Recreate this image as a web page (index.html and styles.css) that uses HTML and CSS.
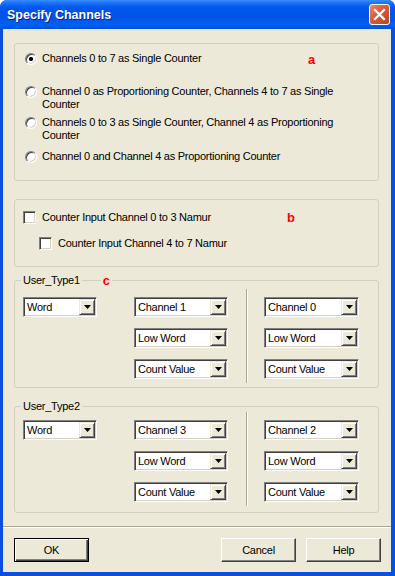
FILE: index.html
```html
<!DOCTYPE html>
<html>
<head>
<meta charset="utf-8">
<title>Specify Channels</title>
<link rel="stylesheet" href="styles.css">
</head>
<body>
<div class="window">
	<div class="titlebar">
		<span class="title">Specify Channels</span>
		<span class="close"><svg width="19" height="19" viewBox="0 0 19 19"><path d="M5 5 L14 14 M14 5 L5 14" stroke="#fff" stroke-width="2.2" stroke-linecap="square"/></svg></span>
	</div>
	<div class="client">
		<div class="group group-mode">
			<div class="option"><span class="radio checked"></span><span class="label">Channels 0 to 7 as Single Counter</span></div>
			<div class="option opt2"><span class="radio"></span><span class="label">Channel 0 as Proportioning Counter, Channels 4 to 7 as Single<br>Counter</span></div>
			<div class="option opt3"><span class="radio"></span><span class="label">Channels 0 to 3 as Single Counter, Channel 4 as Proportioning<br>Counter</span></div>
			<div class="option opt4"><span class="radio"></span><span class="label">Channel 0 and Channel 4 as Proportioning Counter</span></div>
			<span class="note note-a">a</span>
		</div>

		<div class="group group-namur">
			<div class="check-row"><span class="check"></span><span class="label">Counter Input Channel 0 to 3 Namur</span></div>
			<div class="check-row sub"><span class="check"></span><span class="label">Counter Input Channel 4 to 7 Namur</span></div>
			<span class="note note-b">b</span>
		</div>

		<div class="group group-type type1">
			<div class="legend"><span class="legend-text">User_Type1</span><span class="note-c">c</span></div>
			<div class="combos">
				<div class="combo w-type"><span class="combo-text">Word</span><span class="combo-btn"><svg width="7" height="4"><polygon points="0,0 7,0 3.5,4" fill="#000"/></svg></span></div>
				<div class="combo-col first">
					<div class="combo"><span class="combo-text">Channel 1</span><span class="combo-btn"><svg width="7" height="4"><polygon points="0,0 7,0 3.5,4" fill="#000"/></svg></span></div>
					<div class="combo"><span class="combo-text">Low Word</span><span class="combo-btn"><svg width="7" height="4"><polygon points="0,0 7,0 3.5,4" fill="#000"/></svg></span></div>
					<div class="combo"><span class="combo-text">Count Value</span><span class="combo-btn"><svg width="7" height="4"><polygon points="0,0 7,0 3.5,4" fill="#000"/></svg></span></div>
				</div>
				<div class="vsep"></div>
				<div class="combo-col second">
					<div class="combo"><span class="combo-text">Channel 0</span><span class="combo-btn"><svg width="7" height="4"><polygon points="0,0 7,0 3.5,4" fill="#000"/></svg></span></div>
					<div class="combo"><span class="combo-text">Low Word</span><span class="combo-btn"><svg width="7" height="4"><polygon points="0,0 7,0 3.5,4" fill="#000"/></svg></span></div>
					<div class="combo"><span class="combo-text">Count Value</span><span class="combo-btn"><svg width="7" height="4"><polygon points="0,0 7,0 3.5,4" fill="#000"/></svg></span></div>
				</div>
			</div>
		</div>

		<div class="group group-type type2">
			<div class="legend"><span class="legend-text">User_Type2</span></div>
			<div class="combos">
				<div class="combo w-type"><span class="combo-text">Word</span><span class="combo-btn"><svg width="7" height="4"><polygon points="0,0 7,0 3.5,4" fill="#000"/></svg></span></div>
				<div class="combo-col first">
					<div class="combo"><span class="combo-text">Channel 3</span><span class="combo-btn"><svg width="7" height="4"><polygon points="0,0 7,0 3.5,4" fill="#000"/></svg></span></div>
					<div class="combo"><span class="combo-text">Low Word</span><span class="combo-btn"><svg width="7" height="4"><polygon points="0,0 7,0 3.5,4" fill="#000"/></svg></span></div>
					<div class="combo"><span class="combo-text">Count Value</span><span class="combo-btn"><svg width="7" height="4"><polygon points="0,0 7,0 3.5,4" fill="#000"/></svg></span></div>
				</div>
				<div class="vsep"></div>
				<div class="combo-col second">
					<div class="combo"><span class="combo-text">Channel 2</span><span class="combo-btn"><svg width="7" height="4"><polygon points="0,0 7,0 3.5,4" fill="#000"/></svg></span></div>
					<div class="combo"><span class="combo-text">Low Word</span><span class="combo-btn"><svg width="7" height="4"><polygon points="0,0 7,0 3.5,4" fill="#000"/></svg></span></div>
					<div class="combo"><span class="combo-text">Count Value</span><span class="combo-btn"><svg width="7" height="4"><polygon points="0,0 7,0 3.5,4" fill="#000"/></svg></span></div>
				</div>
			</div>
		</div>

		<div class="hsep"></div>
		<div class="buttons">
			<span class="btn default">OK</span>
			<span class="btn cancel">Cancel</span>
			<span class="btn">Help</span>
		</div>
	</div>
</div>
</body>
</html>
```

FILE: styles.css
```css
body { margin:0; background:#fff; font-family:"Liberation Sans", Arial, sans-serif; font-size:11px; letter-spacing:-0.25px; color:#000;}
.window { width:395px; height:576px; box-sizing:border-box; background:#0A4FE0; border-radius:7px 7px 0 0; display:flex; flex-direction:column; overflow:hidden;}

.titlebar { height:29px; flex:none; display:flex; align-items:center; background:linear-gradient(to bottom, #3A8CFF 0%, #1E74F6 10%, #0058EE 24%, #0054E6 60%, #0060F4 86%, #0050D8 100%);}
.title { margin-left:7px; margin-top:1px; font-weight:bold; font-size:12.5px; letter-spacing:0; color:#fff; text-shadow:1px 1px #0A1E8C;}
.close { margin-left:auto; margin-right:5px; width:21px; height:21px; box-sizing:border-box; border:1px solid #fff; border-radius:3px; background:linear-gradient(135deg, #E88A6A 0%, #D8603A 40%, #C2401A 100%); display:flex; align-items:center; justify-content:center;}

.client { flex:1; margin:0 4px 4px 3px; background:#ECE9D8; display:flex; flex-direction:column;}

.group { position:relative; box-sizing:border-box; margin-left:11px; width:365px; border:1px solid #D0D0BF; border-radius:3px;}
.group-mode { margin-top:14px; height:138px; padding:8px 0 0 10px;}
.group-namur { margin-top:18px; height:68px; padding:11px 0 0 8px;}
.type1 { margin-top:13px; height:108px;}
.type2 { margin-top:18px; height:107px;}

.label { line-height:13px; white-space:nowrap;}

.option { display:flex; align-items:flex-start;}
.opt2 { margin-top:20px;}
.opt3 { margin-top:5px;}
.opt4 { margin-top:8px;}
.radio { flex:none; width:12px; height:12px; box-sizing:border-box; margin:1px 5px 0 0; border-radius:50%; border:1px solid; border-color:#808080 #fff #fff #808080; box-shadow:inset 1px 1px #404040, inset -1px -1px #D4D0C8; background:#fff;}
.radio.checked { background:radial-gradient(circle, #000 0, #000 1.8px, #fff 2.4px);}

.check-row { display:flex; align-items:center;}
.check-row.sub { margin:13px 0 0 16px;}
.check { flex:none; width:13px; height:13px; box-sizing:border-box; margin-right:6px; border:1px solid; border-color:#808080 #fff #fff #808080; box-shadow:inset 1px 1px #404040, inset -1px -1px #D4D0C8; background:#fff;}

.note { position:absolute; color:#F00; font-weight:bold; font-size:13px; line-height:13px;}
.note-a { left:293px; top:9px;}
.note-b { left:272px; top:11px;}

.legend { display:flex; height:13px; line-height:13px; margin:-7px 0 0 6px;}
.legend-text { padding:0 2px; background:#ECE9D8;}
.note-c { margin-left:19px; padding:0 2px; background:#ECE9D8; color:#F00; font-weight:bold; font-size:13px;}

.combos { display:flex; align-items:flex-start; padding-left:8px;}
.type1 .combos { margin-top:10px;}
.type2 .combos { margin-top:7px;}
.combo-col { display:flex; flex-direction:column; gap:11px;}
.combo-col.first { margin-left:37px; width:94px;}
.combo-col.second { margin-left:16px; width:95px;}
.vsep { align-self:stretch; width:0; margin:-8px 0 -4px 18px; border-left:1px solid #ACA899; border-right:1px solid #fff;}

.combo { display:flex; height:20px; box-sizing:border-box; padding:1px; border:1px solid; border-color:#808080 #fff #fff #808080; box-shadow:inset 1px 1px #404040, inset -1px -1px #D4D0C8; background:#fff;}
.combo.w-type { width:74px;}
.combo-text { flex:1; padding-left:2px; line-height:16px; white-space:nowrap; overflow:hidden;}
.combo-btn { flex:none; width:16px; height:16px; box-sizing:border-box; background:#ECE9D8; border:1px solid; border-color:#ECE9D8 #404040 #404040 #ECE9D8; box-shadow:inset 1px 1px #fff, inset -1px -1px #808080; display:flex; align-items:center; justify-content:center;}
.combo-btn svg { display:block;}

.hsep { margin-top:13px; height:0; border-top:1px solid #ACA899; border-bottom:1px solid #fff;}

.buttons { display:flex; margin-top:10px; padding:0 10px 0 11px; gap:10px;}
.btn { width:75px; height:24px; box-sizing:border-box; display:flex; align-items:center; justify-content:center; background:#ECE9D8; border:1px solid; border-color:#fff #404040 #404040 #fff; box-shadow:inset -1px -1px #808080;}
.btn.default { border-color:#000; box-shadow:inset 1px 1px #fff, inset -1px -1px #404040, inset -2px -2px #808080;}
.btn.cancel { margin-left:auto;}
```
